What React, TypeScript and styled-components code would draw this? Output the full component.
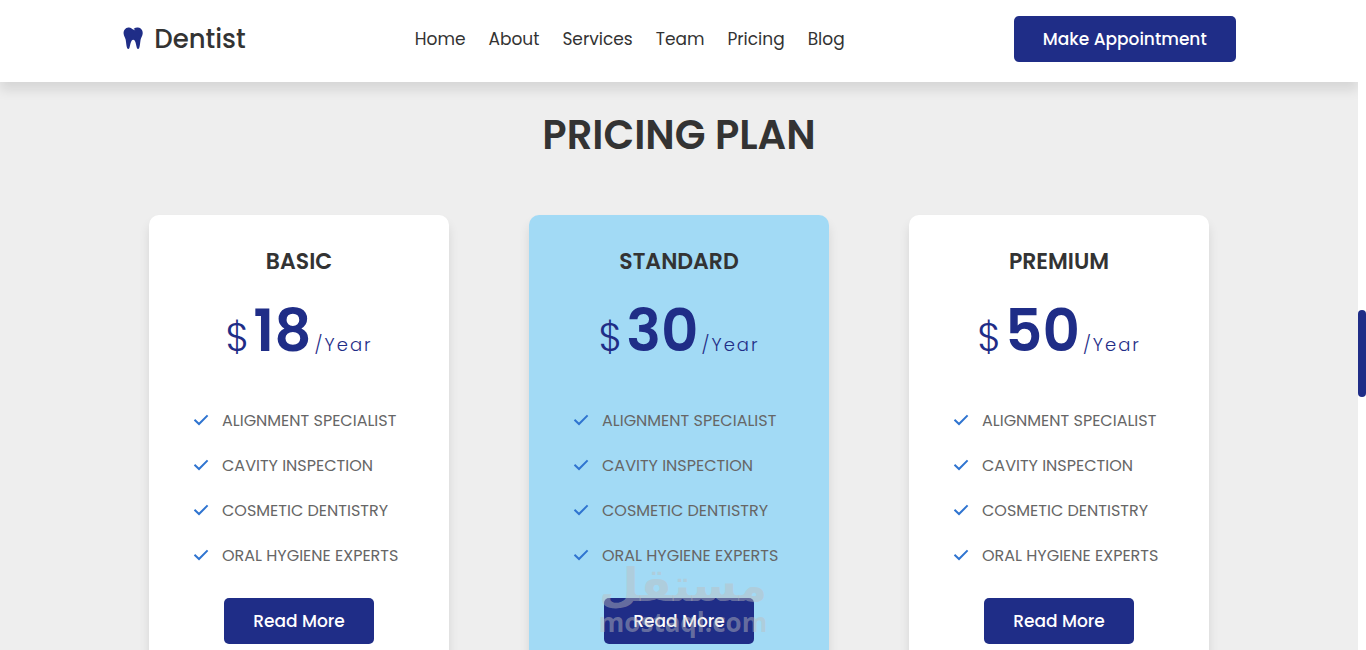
import React from 'react';
import styled, { createGlobalStyle } from 'styled-components';

const navy = '#1f2d87';
const ink = '#333333';

const GlobalStyle = createGlobalStyle`
  *, *::before, *::after { box-sizing: border-box; }
  body {
    margin: 0;
    color: ${ink};
    background: #eeeeee;
    font-family: Poppins, Inter, "Liberation Sans", sans-serif;
  }
  h1, h2, p, ul { margin: 0; padding: 0; }
`;

const Shell = styled.div`
  display: grid;
  grid-template-columns: minmax(0, 1fr) 8px;
  height: 100vh;
  overflow: hidden;
`;

const Page = styled.div`
  position: relative;
  height: 100vh;
  overflow: hidden;
`;

const ScrollTrack = styled.div`
  height: 100vh;
  padding-top: 310px;
  background: #ffffff;
`;

const ScrollThumb = styled.div`
  height: 87px;
  border-radius: 4px;
  background: ${navy};
`;

const Header = styled.header`
  display: flex;
  align-items: center;
  justify-content: space-between;
  padding: 16px 9% 20px;
  background: #ffffff;
  box-shadow: 0 8px 11px rgba(0, 0, 0, 0.1);
`;

const Logo = styled.a`
  display: flex;
  align-items: center;
  gap: 10px;
  color: ${ink};
  font-size: 26px;
  line-height: 40px;
  font-weight: 500;
  text-decoration: none;
`;

const Nav = styled.nav`
  display: flex;
  gap: 23px;
`;

const NavLink = styled.a`
  color: ${ink};
  font-size: 17px;
  line-height: 28px;
  font-weight: 400;
  text-decoration: none;
`;

const Button = styled.button<{ $width: number }>`
  width: ${({ $width }) => $width}px;
  height: 46px;
  border: 0;
  border-radius: 5px;
  background: ${navy};
  color: #ffffff;
  font-family: inherit;
  font-size: 17px;
  font-weight: 500;
  cursor: pointer;
`;

const Pricing = styled.main`
  display: flex;
  flex-direction: column;
  align-items: center;
  gap: 50px;
  padding: 23px 0 60px;
`;

const Heading = styled.h1`
  font-size: 40px;
  line-height: 60px;
  font-weight: 600;
  text-transform: uppercase;
`;

const Plans = styled.div`
  display: flex;
  justify-content: center;
  gap: 80px;
`;

const Card = styled.section<{ $featured?: boolean }>`
  display: flex;
  flex-direction: column;
  align-items: center;
  width: 300px;
  padding: 31px 44px 40px;
  border-radius: 10px;
  background: ${({ $featured }) => ($featured ? '#a2daf5' : '#ffffff')};
  box-shadow: 0 8px 11px rgba(0, 0, 0, 0.1);
`;

const PlanName = styled.h2`
  font-size: 22px;
  line-height: 32px;
  font-weight: 600;
  text-transform: uppercase;
`;

const Price = styled.p`
  display: flex;
  align-items: baseline;
  height: 88px;
  margin-top: 9px;
  color: ${navy};
  line-height: 88px;
`;

const Currency = styled.span`
  margin-right: 4px;
  font-size: 40px;
  font-weight: 300;
`;

const Amount = styled.span`
  font-size: 58px;
  font-weight: 600;
`;

const Period = styled.span`
  margin-left: 3px;
  font-size: 18px;
  font-weight: 300;
  letter-spacing: 2px;
`;

const Features = styled.ul`
  display: flex;
  flex-direction: column;
  align-self: stretch;
  margin: 23px 0 20px;
  list-style: none;
`;

const Feature = styled.li`
  display: flex;
  align-items: center;
  gap: 13px;
  height: 45px;
  color: #666666;
  font-size: 16px;
  white-space: nowrap;
  text-transform: uppercase;
`;

const Watermark = styled.div`
  position: absolute;
  top: 562px;
  left: 50%;
  display: flex;
  flex-direction: column;
  align-items: center;
  margin-left: 4px;
  transform: translateX(-50%);
  color: rgba(190, 190, 190, 0.45);
  font-weight: 700;
  pointer-events: none;
`;

const WatermarkName = styled.span`
  font-family: "DejaVu Sans", sans-serif;
  font-size: 46px;
  line-height: 46px;
`;

const WatermarkSite = styled.span`
  font-family: "Open Sans", sans-serif;
  font-size: 26px;
  line-height: 28px;
`;

const ToothIcon = () => (
  <svg width="22" height="24" viewBox="0 1 22 24" fill={navy} aria-hidden="true">
    <path d="M6.4 1.5C8.6 1.2 9.7 2.6 11.2 3.6C11.9 4.1 12.7 4.4 13.3 4.3C12.6 3.8 12.1 3.3 11.7 2.7C13.2 1.8 14.5 1.3 16 1.5C19 1.8 21 4.3 20.7 7.4C20.5 9.8 19 11.3 18.6 13.7C18.1 16.7 18 20 17.2 22C16.7 23.2 15.3 23.2 14.9 21.9C14.1 19.5 13.9 16.7 12.8 14.8C12.1 13.5 10.3 13.5 9.6 14.8C8.5 16.7 8.2 19.5 7.4 21.9C7 23.2 5.6 23.2 5.1 22C4.3 20 4.2 16.7 3.7 13.7C3.2 11.3 1.8 9.8 1.6 7.4C1.4 4.3 3.4 1.8 6.4 1.5Z" />
  </svg>
);

const CheckIcon = () => (
  <svg width="16" height="16" viewBox="0 0 16 16" fill="none" stroke="#2f74d0" strokeWidth="2" aria-hidden="true">
    <path d="M1.5 6.8 6 11 14.6 2.4" />
  </svg>
);

const links = ['Home', 'About', 'Services', 'Team', 'Pricing', 'Blog'];

const features = ['Alignment Specialist', 'Cavity Inspection', 'Cosmetic Dentistry', 'Oral Hygiene Experts'];

const plans = [
  { name: 'Basic', amount: 18 },
  { name: 'Standard', amount: 30, featured: true },
  { name: 'Premium', amount: 50 },
];

export default function App() {
  return (
    <>
      <GlobalStyle />
      <Shell>
        <Page>
          <Header>
            <Logo href="#home">
              <ToothIcon />
              Dentist
            </Logo>
            <Nav aria-label="Main">
              {links.map((link) => (
                <NavLink key={link} href={`#${link.toLowerCase()}`}>{link}</NavLink>
              ))}
            </Nav>
            <Button type="button" $width={222}>Make Appointment</Button>
          </Header>
          <Pricing>
            <Heading>Pricing Plan</Heading>
            <Plans>
              {plans.map((plan) => (
                <Card key={plan.name} $featured={plan.featured}>
                  <PlanName>{plan.name}</PlanName>
                  <Price>
                    <Currency>$</Currency>
                    <Amount>{plan.amount}</Amount>
                    <Period>/Year</Period>
                  </Price>
                  <Features>
                    {features.map((feature) => (
                      <Feature key={feature}>
                        <CheckIcon />
                        {feature}
                      </Feature>
                    ))}
                  </Features>
                  <Button type="button" $width={150}>Read More</Button>
                </Card>
              ))}
            </Plans>
          </Pricing>
          <Watermark aria-hidden="true">
            <WatermarkName lang="ar">مستقل</WatermarkName>
            <WatermarkSite>mostaql.com</WatermarkSite>
          </Watermark>
        </Page>
        <ScrollTrack aria-hidden="true">
          <ScrollThumb />
        </ScrollTrack>
      </Shell>
    </>
  );
}
